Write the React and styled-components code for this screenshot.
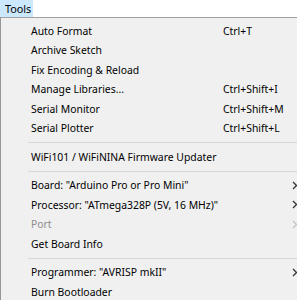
import React from "react"
import styled, { createGlobalStyle } from "styled-components"

const GlobalStyle = createGlobalStyle`
  html, body {
    margin: 0;
    padding: 0;
    background: #ffffff;
    overflow: hidden;
  }
  body {
    font-family: "Noto Sans", "Liberation Sans", sans-serif;
    font-size: 10.4px;
    color: #000000;
  }
`

const MenuBar = styled.div`
  display: flex;
  height: 17px;
  background: #ffffff;
`

const MenuTitle = styled.div`
  display: flex;
  align-items: center;
  width: 33px;
  box-sizing: border-box;
  padding-left: 4px;
  background: ${p => (p.active ? "#cce8ff" : "transparent")};
  border: 1px solid ${p => (p.active ? "#cce8ff" : "transparent")};
  font-size: 10.8px;
  line-height: 15px;
`

const Dropdown = styled.div`
  width: 320px;
  background: #f0f0f0;
  border-top: 1px solid #a0a0a0;
  border-left: 1px solid #979797;
  padding: 3px 0 4px;
  box-sizing: border-box;
`

const Item = styled.div`
  display: grid;
  grid-template-columns: 30px 192px 1fr 28px;
  align-items: center;
  height: 19.5px;
  color: ${p => (p.disabled ? "#8d8d8d" : "#000000")};
  white-space: nowrap;
`

const Label = styled.span`
  grid-column: 2;
`

const Shortcut = styled.span`
  grid-column: 3;
`

const Arrow = styled.span`
  grid-column: 4;
  display: flex;
  align-items: center;
  color: ${p => (p.disabled ? "#c2c2c2" : "#333333")};
`

const Separator = styled.div`
  height: 9px;
  display: flex;
  align-items: center;
  padding-left: 27px;
  &::after {
    content: "";
    flex: 1;
    height: 1px;
    background: #d7d7d7;
  }
`

const Chevron = () => (
  <svg width="6" height="9" viewBox="0 0 6 9">
    <path d="M1 1 L4.5 4.5 L1 8" fill="none" stroke="currentColor" strokeWidth="1.3" />
  </svg>
)

const items = [
  { label: "Auto Format", shortcut: "Ctrl+T" },
  { label: "Archive Sketch" },
  { label: "Fix Encoding & Reload" },
  { label: "Manage Libraries...", shortcut: "Ctrl+Shift+I" },
  { label: "Serial Monitor", shortcut: "Ctrl+Shift+M" },
  { label: "Serial Plotter", shortcut: "Ctrl+Shift+L" },
  { sep: true },
  { label: "WiFi101 / WiFiNINA Firmware Updater" },
  { sep: true },
  { label: "Board: \"Arduino Pro or Pro Mini\"", sub: true },
  { label: "Processor: \"ATmega328P (5V, 16 MHz)\"", sub: true },
  { label: "Port", sub: true, disabled: true },
  { label: "Get Board Info" },
  { sep: true },
  { label: "Programmer: \"AVRISP mkII\"", sub: true },
  { label: "Burn Bootloader" },
]

function App() {
  return (
    <>
      <GlobalStyle />
      <MenuBar>
        <MenuTitle active>Tools</MenuTitle>
      </MenuBar>
      <Dropdown>
        {items.map((item, index) => {
          if (item.sep) return <Separator key={index} />
          return (
            <Item key={index} disabled={item.disabled}>
              <Label>{item.label}</Label>
              {item.shortcut ? <Shortcut>{item.shortcut}</Shortcut> : null}
              {item.sub ? (
                <Arrow disabled={item.disabled}>
                  <Chevron />
                </Arrow>
              ) : null}
            </Item>
          )
        })}
      </Dropdown>
    </>
  )
}

export default App
